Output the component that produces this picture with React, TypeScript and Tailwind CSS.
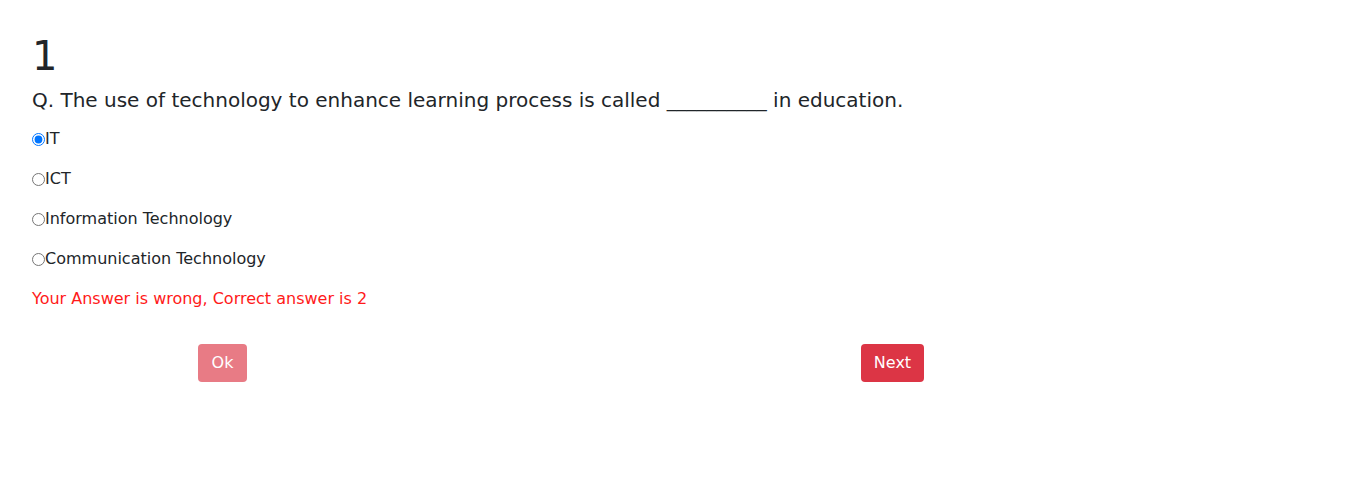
import { useState } from 'react'

const options = ['IT', 'ICT', 'Information Technology', 'Communication Technology']

export default function App() {
  const [selected, setSelected] = useState(0)

  return (
    <div className="min-h-[482px] bg-white px-8 pt-8 text-[#212529]" style={{ fontFamily: '"DejaVu Sans", sans-serif' }}>
      <h1 className="text-[40px] leading-[48px] font-normal">1</h1>
      <h5 className="mt-2 text-[20px] leading-6 font-normal">
        Q. The use of technology to enhance learning process is called __________ in education.
      </h5>

      <div className="mt-[7px]">
        {options.map((opt, i) => (
          <label key={opt} className="flex h-10 items-center text-base">
            <input
              type="radio"
              name="answer"
              className="m-0 h-[13px] w-[13px]"
              checked={selected === i}
              onChange={() => setSelected(i)}
            />
            {opt}
          </label>
        ))}
        <p className="flex h-10 items-center text-base text-[#ff1a1a]">Your Answer is wrong, Correct answer is 2</p>
      </div>

      {/* Actions */}
      <div className="mt-[25px] flex">
        <button disabled className="ml-[166px] h-[38px] w-[49px] rounded bg-[#dc3545] text-base text-white opacity-65">
          Ok
        </button>
        <button className="ml-[614px] h-[38px] w-[63px] rounded bg-[#dc3545] text-base text-white">Next</button>
      </div>
    </div>
  )
}
